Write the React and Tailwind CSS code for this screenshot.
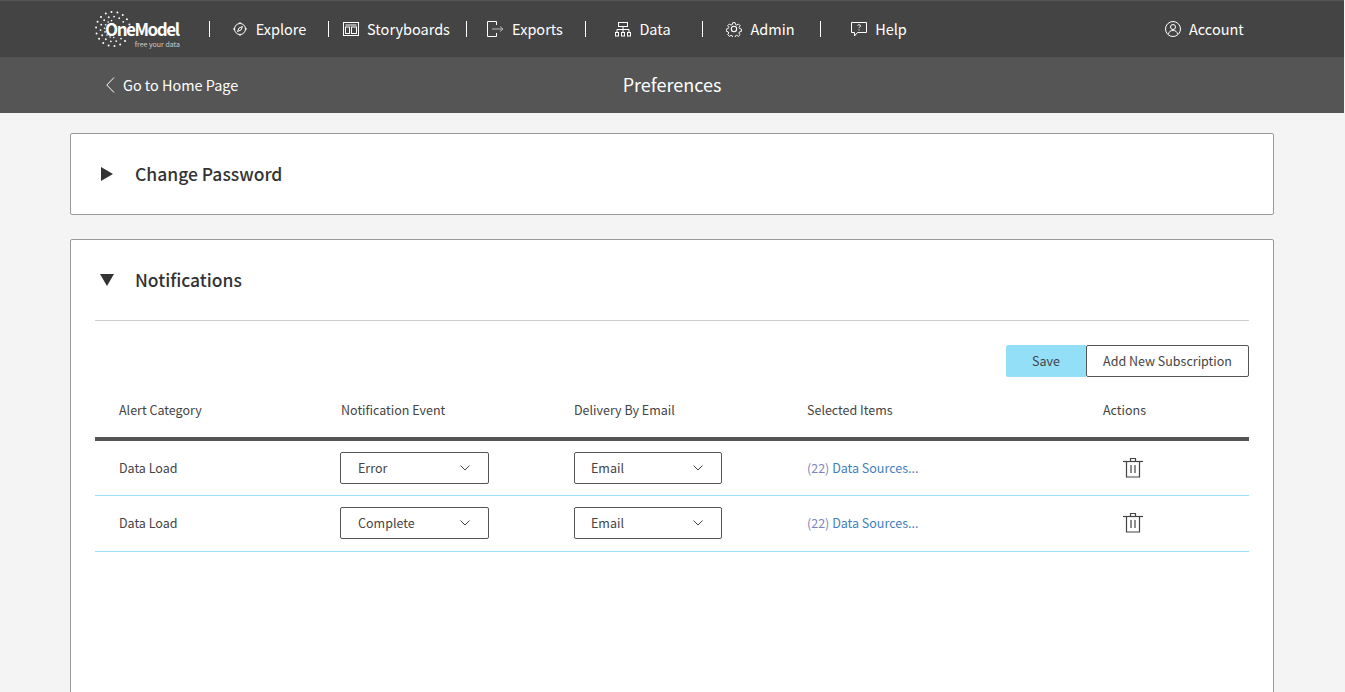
import React from "react";

const outerDots = [-75, -55, -35, -15, 5, -95, -115, -135, -155, -175, 165, 145, 125, 105, 85, 65, 45];
const midDots = [-60, -35, -85, -110, -135, -160, 175, 150, 125, 100, 75, 50];
const innerDots = [-100, -125, -150, -175, 160, 135, 110, 85];

function Logo() {
  const dot = (r, a, s) => (
    <circle
      key={r + "_" + a}
      cx={19 + r * Math.cos((a * Math.PI) / 180)}
      cy={18 + r * Math.sin((a * Math.PI) / 180)}
      r={s}
      fill="#fff"
    />
  );
  return (
    <div className="relative w-[86px] h-[37px] ml-[94px] mr-[29px] shrink-0">
      <svg width="40" height="37" viewBox="0 0 40 37" className="absolute left-0 top-0">
        {outerDots.map((a) => dot(17, a, 1))}
        {midDots.map((a) => dot(12.5, a, 0.9))}
        {innerDots.map((a) => dot(8.5, a, 0.8))}
      </svg>
      <span className="absolute left-[11px] top-[9px] text-[17px] leading-[18px] font-bold tracking-[-1.45px] text-white whitespace-nowrap">
        OneModel
      </span>
      <span className="absolute right-0 top-[29px] text-[7px] leading-[8px] text-[#ccc] whitespace-nowrap">
        free your data
      </span>
    </div>
  );
}

function ExploreIcon() {
  return (
    <svg width="16" height="16" viewBox="0 0 16 16" fill="none" stroke="#fff" strokeWidth="1">
      <circle cx="8" cy="8" r="5.5" />
      <path d="M10.5 5.500 9 9 5.500 10.500 7 7Z" />
      <path d="M8 1v1.500M8 13.500V15M1 8h1.500M13.500 8H15" />
    </svg>
  );
}

function StoryIcon() {
  return (
    <svg width="16" height="14" viewBox="0 0 16 14" fill="none" stroke="#fff" strokeWidth="1">
      <rect x="0.5" y="0.5" width="15" height="13" />
      <path d="M2.500 3h11" />
      <rect x="2.500" y="5" width="4" height="6.500" />
      <rect x="8.500" y="5" width="5" height="6.500" />
    </svg>
  );
}

function ExportIcon() {
  return (
    <svg width="17" height="16" viewBox="0 0 17 16" fill="none" stroke="#fff" strokeWidth="1">
      <path d="M9.500 4V.5h-9v15h9V12" />
      <path d="M5 8h11M13 5.500 16 8l-3 2.500" stroke="#bbb" />
    </svg>
  );
}

function DataIcon() {
  return (
    <svg width="16" height="15" viewBox="0 0 16 15" fill="none" stroke="#fff" strokeWidth="1">
      <rect x="3.500" y="0.5" width="9" height="4" />
      <path d="M8 4.500V7.500M2 10V7.500h12V10M8 7.500V10" />
      <rect x="0.5" y="10.500" width="3" height="3.500" />
      <rect x="6.500" y="10.500" width="3" height="3.500" />
      <rect x="12.500" y="10.500" width="3" height="3.500" />
    </svg>
  );
}

function GearIcon() {
  return (
    <svg width="16" height="16" viewBox="0 0 24 24" fill="none" stroke="#fff" strokeWidth="1.600" strokeLinejoin="round">
      <path d="M10 1.500h4l.7 3.200 2 .9 2.800-1.800 2.800 2.800-1.800 2.800.9 2 3.100.7v4l-3.200.7-.9 2 1.800 2.800-2.800 2.800-2.800-1.800-2 .9-.7 3h-4l-.7-3-2-.9-2.800 1.800-2.800-2.800 1.800-2.800-.9-2-3.200-.7v-4l3.200-.7.9-2-1.800-2.800 2.800-2.800 2.800 1.800 2-.9z" transform="translate(1.100 1.100) scale(.9)" />
      <circle cx="12" cy="12" r="4" />
    </svg>
  );
}

function HelpIcon() {
  return (
    <svg width="16" height="15" viewBox="0 0 16 15" fill="none" stroke="#fff" strokeWidth="1">
      <path d="M.5.5h15v10H6.500L3.500 14v-3.500H.5Z" />
      <path d="M6.500 3.500c.3-1 3-1.200 3 .5 0 1-1.500 1-1.500 2.200" />
      <path d="M8 7.500v1" />
    </svg>
  );
}

function AccountIcon() {
  return (
    <svg width="16" height="16" viewBox="0 0 16 16" fill="none" stroke="#fff" strokeWidth="1">
      <circle cx="8" cy="8" r="7.500" />
      <circle cx="8" cy="6" r="2.500" />
      <path d="M3.500 13c.5-2.500 2-3.500 4.500-3.500s4 1 4.500 3.500" />
    </svg>
  );
}

function TrashIcon() {
  return (
    <svg width="20" height="21" viewBox="0 0 20 21" fill="none" stroke="#444" strokeWidth="1.200" className="-mt-px">
      <path d="M0 4.500h20" />
      <path d="M7.500 4V1.500h5V4" />
      <path d="M3.500 4.500v15.500h13V4.500" />
      <path d="M8 8v8M12 8v8" />
    </svg>
  );
}

function Chevron() {
  return (
    <svg width="10" height="6" viewBox="0 0 10 6" fill="none" stroke="#444" strokeWidth="1">
      <path d="M.5.5 5 5 9.500.5" />
    </svg>
  );
}

function NavItem({ icon, label, width }) {
  return (
    <div className={`flex items-center justify-center gap-2 h-4 border-l border-white ${width}`}>
      {icon}
      <span className="text-[14.5px] leading-5 text-white">{label}</span>
    </div>
  );
}

function Select({ value, width }) {
  return (
    <div className={`flex items-center justify-between h-8 pr-[18px] bg-white border border-[#555] rounded-[2px] text-[12.5px] text-[#444] ${width}`}>
      <span>{value}</span>
      <Chevron />
    </div>
  );
}

function Row({ event, height }) {
  return (
    <div className={`grid grid-cols-[245px_234px_233px_296px_1fr] items-center border-b border-[#9bdff5] text-[12.5px] text-[#444] ${height}`}>
      <div className="pl-6">Data Load</div>
      <div><Select value={event} width="w-[149px] pl-[17px]" /></div>
      <div><Select value="Email" width="w-[148px] pl-4" /></div>
      <div className="text-[#3f7fbf]"><span className="text-[#7b86c0]">(22)</span> Data Sources...</div>
      <div className="pl-5"><TrashIcon /></div>
    </div>
  );
}

export default function App() {
  return (
    <div className="h-screen overflow-hidden bg-[#f4f4f4] font-['Noto_Sans_CJK_KR','Noto_Sans',sans-serif]">
      <div className="flex items-center h-[57px] mr-px bg-[#444] border-t border-[#555]">
        <Logo />
        <NavItem icon={<ExploreIcon />} label="Explore" width="w-[119px]" />
        <NavItem icon={<StoryIcon />} label="Storyboards" width="w-[138px] pr-[2px]" />
        <NavItem icon={<ExportIcon />} label="Exports" width="w-[119px] pr-[2px]" />
        <NavItem icon={<DataIcon />} label="Data" width="w-[117px] pr-[2px]" />
        <NavItem icon={<GearIcon />} label="Admin" width="w-[118px] pr-[2px]" />
        <NavItem icon={<HelpIcon />} label="Help" width="w-[117px]" />
        <div className="flex items-center gap-2 ml-[228px]">
          <AccountIcon />
          <span className="text-[14.5px] leading-5 text-white">Account</span>
        </div>
      </div>

      <div className="relative flex items-center justify-center h-14 mr-px bg-[#555]">
        <div className="absolute left-[106px] flex items-center gap-2 text-[14.4px] leading-5 text-white">
          <svg width="9" height="16" viewBox="0 0 9 16" fill="none" stroke="#fff" strokeWidth="1">
            <path d="M8 .5.800 8 8 15.500" />
          </svg>
          Go to Home Page
        </div>
        <span className="text-lg leading-7 pb-[2px] text-white">Preferences</span>
      </div>

      <div className="mx-[70px] mt-5 flex flex-col gap-6 w-[1204px]">
        <div className="flex items-center h-[82px] pl-[30px] bg-white border border-[#999] rounded-[2px]">
          <span className="w-0 h-0 border-y-[7px] border-y-transparent border-l-[12px] border-l-[#333]" />
          <h2 className="ml-[22px] text-[17.5px] leading-7 font-medium text-[#333]">Change Password</h2>
        </div>

        <div className="h-[500px] px-6 bg-white border border-[#999] rounded-[2px]">
          <div className="flex items-center h-[81px] pl-[5px] border-b border-[#ccc]">
            <span className="w-0 h-0 border-x-[7px] border-x-transparent border-t-[12px] border-t-[#333]" />
            <h2 className="ml-[21px] text-[17.5px] leading-7 font-medium text-[#333]">Notifications</h2>
          </div>

          <div className="flex justify-end mt-6">
            <button className="w-20 h-8 bg-[#94dff8] rounded-l-[2px] text-[12.5px] text-[#444]">Save</button>
            <button className="w-[163px] h-8 bg-white border border-[#555] rounded-[2px] text-[12.5px] text-[#444]">
              Add New Subscription
            </button>
          </div>

          <div className="grid grid-cols-[245px_234px_233px_296px_1fr] items-center h-16 pt-[6px] border-b-4 border-[#555] text-[12.5px] text-[#444]">
            <div className="pl-6">Alert Category</div>
            <div className="pl-px">Notification Event</div>
            <div>Delivery By Email</div>
            <div>Selected Items</div>
            <div>Actions</div>
          </div>
          <Row event="Error" height="h-[55px]" />
          <Row event="Complete" height="h-14 pb-px" />
        </div>
      </div>
    </div>
  );
}
